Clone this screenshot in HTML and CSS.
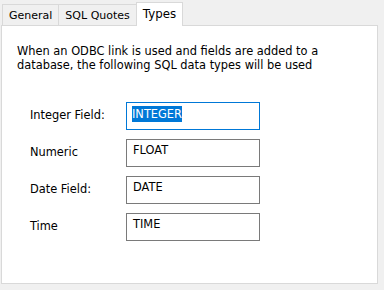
FILE: index.html
```html
<!DOCTYPE html>
<html lang="en">
<head>
    <meta charset="UTF-8">
    <title>Types</title>
    <link rel="stylesheet" href="styles.css">
</head>
<body>
    <!-- Tab strip -->
    <div class="tabs">
        <div class="tab">General</div>
        <div class="tab">SQL Quotes</div>
        <div class="tab active">Types</div>
    </div>

    <!-- Types page -->
    <div class="panel">
        <p class="intro">When an ODBC link is used and fields are added to a database, the following SQL data types will be used</p>

        <div class="fields">
            <label class="label">Integer Field:</label>
            <div class="textbox focused"><span class="sel">INTEGER</span></div>

            <label class="label">Numeric</label>
            <div class="textbox">FLOAT</div>

            <label class="label">Date Field:</label>
            <div class="textbox">DATE</div>

            <label class="label">Time</label>
            <div class="textbox">TIME</div>
        </div>
    </div>
</body>
</html>
```

FILE: styles.css
```css
body {
    margin: 0;
    background-color: #f0f0f0;
    font-family: "DejaVu Sans", Verdana, sans-serif;
    font-size: 11.4px;
    color: #000;
}

.tabs {
    display: flex;
    align-items: flex-end;
    height: 25px;
    padding-left: 2px;
    font-size: 11px;
}

.tab {
    height: 20px;
    line-height: 21px;
    padding: 0 6px;
    border: 1px solid #d9d9d9;
    border-bottom: none;
    background-color: #f0f0f0;
}

.tab + .tab {
    margin-left: -1px;
}

.tab.active {
    position: relative;
    z-index: 1;
    height: 23px;
    line-height: 22px;
    margin-bottom: -1px;
    background-color: #fff;
    font-size: 11.8px;
}

.panel {
    width: 375px;
    height: 257px;
    margin-left: 1px;
    border: 1px solid #d9d9d9;
    background-color: #fff;
}

.intro {
    margin: 0;
    padding: 18px 40px 0 15px;
    line-height: 14px;
}

.fields {
    display: grid;
    grid-template-columns: 96px 134px;
    grid-auto-rows: 28px;
    row-gap: 9px;
    margin: 30px 0 0 28px;
}

.label {
    align-self: center;
    margin-bottom: 2px;
}

.textbox {
    box-sizing: border-box;
    border: 1px solid #7a7a7a;
    padding: 3px 0 0 6px;
    line-height: 14px;
}

.textbox.focused {
    border-color: #0078d7;
}

.sel {
    display: inline-block;
    padding: 1px 0;
    margin-left: -1px;
    background-color: #0078d7;
    color: #fff;
}
```
